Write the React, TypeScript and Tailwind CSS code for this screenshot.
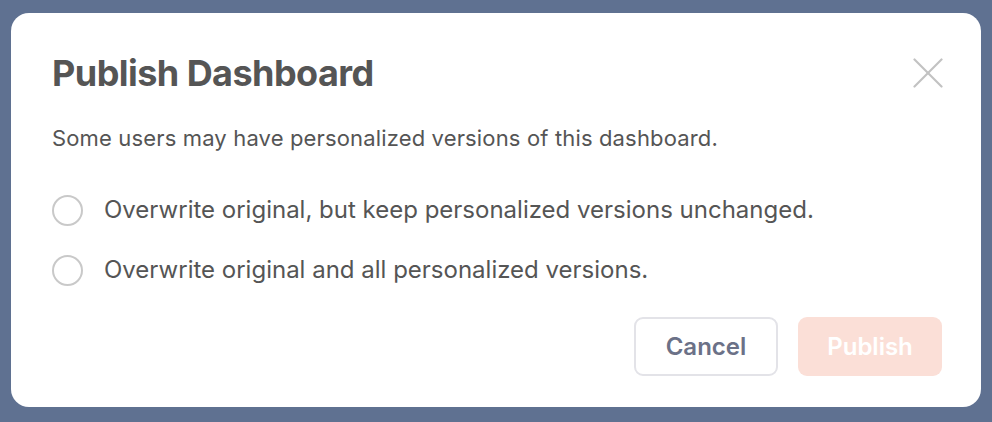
import { useState } from 'react';

const options = [
    { id: 'keep', label: 'Overwrite original, but keep personalized versions unchanged.' },
    { id: 'all', label: 'Overwrite original and all personalized versions.' },
]

const CloseIcon = () => (
    <svg width="30" height="30" viewBox="0 0 30 30" fill="none" stroke="#c2c2c2" strokeWidth="2.2" strokeLinecap="round">
        <path d="M1.5 1.5 28.5 28.5" />
        <path d="M28.5 1.5 1.5 28.5" />
    </svg>
)

const PublishDialog = () => {
    const [choice, setChoice] = useState<string>("")

    return (
        <div className="w-[970px] h-[394px] bg-white rounded-[18px] pl-[41px] pr-[39px] pt-[40px] pb-[31px] flex flex-col">
            <div className="flex items-center justify-between h-[40px]">
                <h2 className="text-[36px] leading-[40px] font-bold text-[#555555] tracking-[-0.55px]">Publish Dashboard</h2>
                <button type="button" className="flex items-center justify-center mr-[-1px]">
                    <CloseIcon />
                </button>
            </div>
            <p className="mt-[31px] text-[22px] leading-[28px] text-[#555555] tracking-[0.15px]">
                Some users may have personalized versions of this dashboard.
            </p>
            <div className="mt-[38px] flex flex-col gap-[20px]">
                {options.map((opt) => (
                    <label key={opt.id} className="flex items-center gap-[21px] h-[40px] cursor-pointer" onClick={() => setChoice(opt.id)}>
                        <span className="w-[31px] h-[31px] rounded-full border-2 border-[#c9c9c9] flex items-center justify-center shrink-0">
                            {choice === opt.id && <span className="w-[15px] h-[15px] rounded-full bg-[#f08b6e]" />}
                        </span>
                        <span className="text-[24px] leading-[28px] text-[#555555]">{opt.label}</span>
                    </label>
                ))}
            </div>
            <div className="mt-[27px] flex justify-end gap-[20px]">
                <button type="button" className="w-[144px] h-[59px] rounded-[9px] border-2 border-[#e3e3e8] bg-white text-[24px] font-semibold text-[#6b7187]">
                    Cancel
                </button>
                <button type="button" disabled={!choice} className="w-[144px] h-[59px] rounded-[9px] bg-[#fbdfd7] text-[24px] font-semibold text-white">
                    Publish
                </button>
            </div>
        </div>
    )
}

export default function App() {
    return (
        <div className="min-h-screen bg-[#5f7191] pl-[11px] pt-[13px] font-['Inter',sans-serif]">
            <PublishDialog />
        </div>
    )
}
